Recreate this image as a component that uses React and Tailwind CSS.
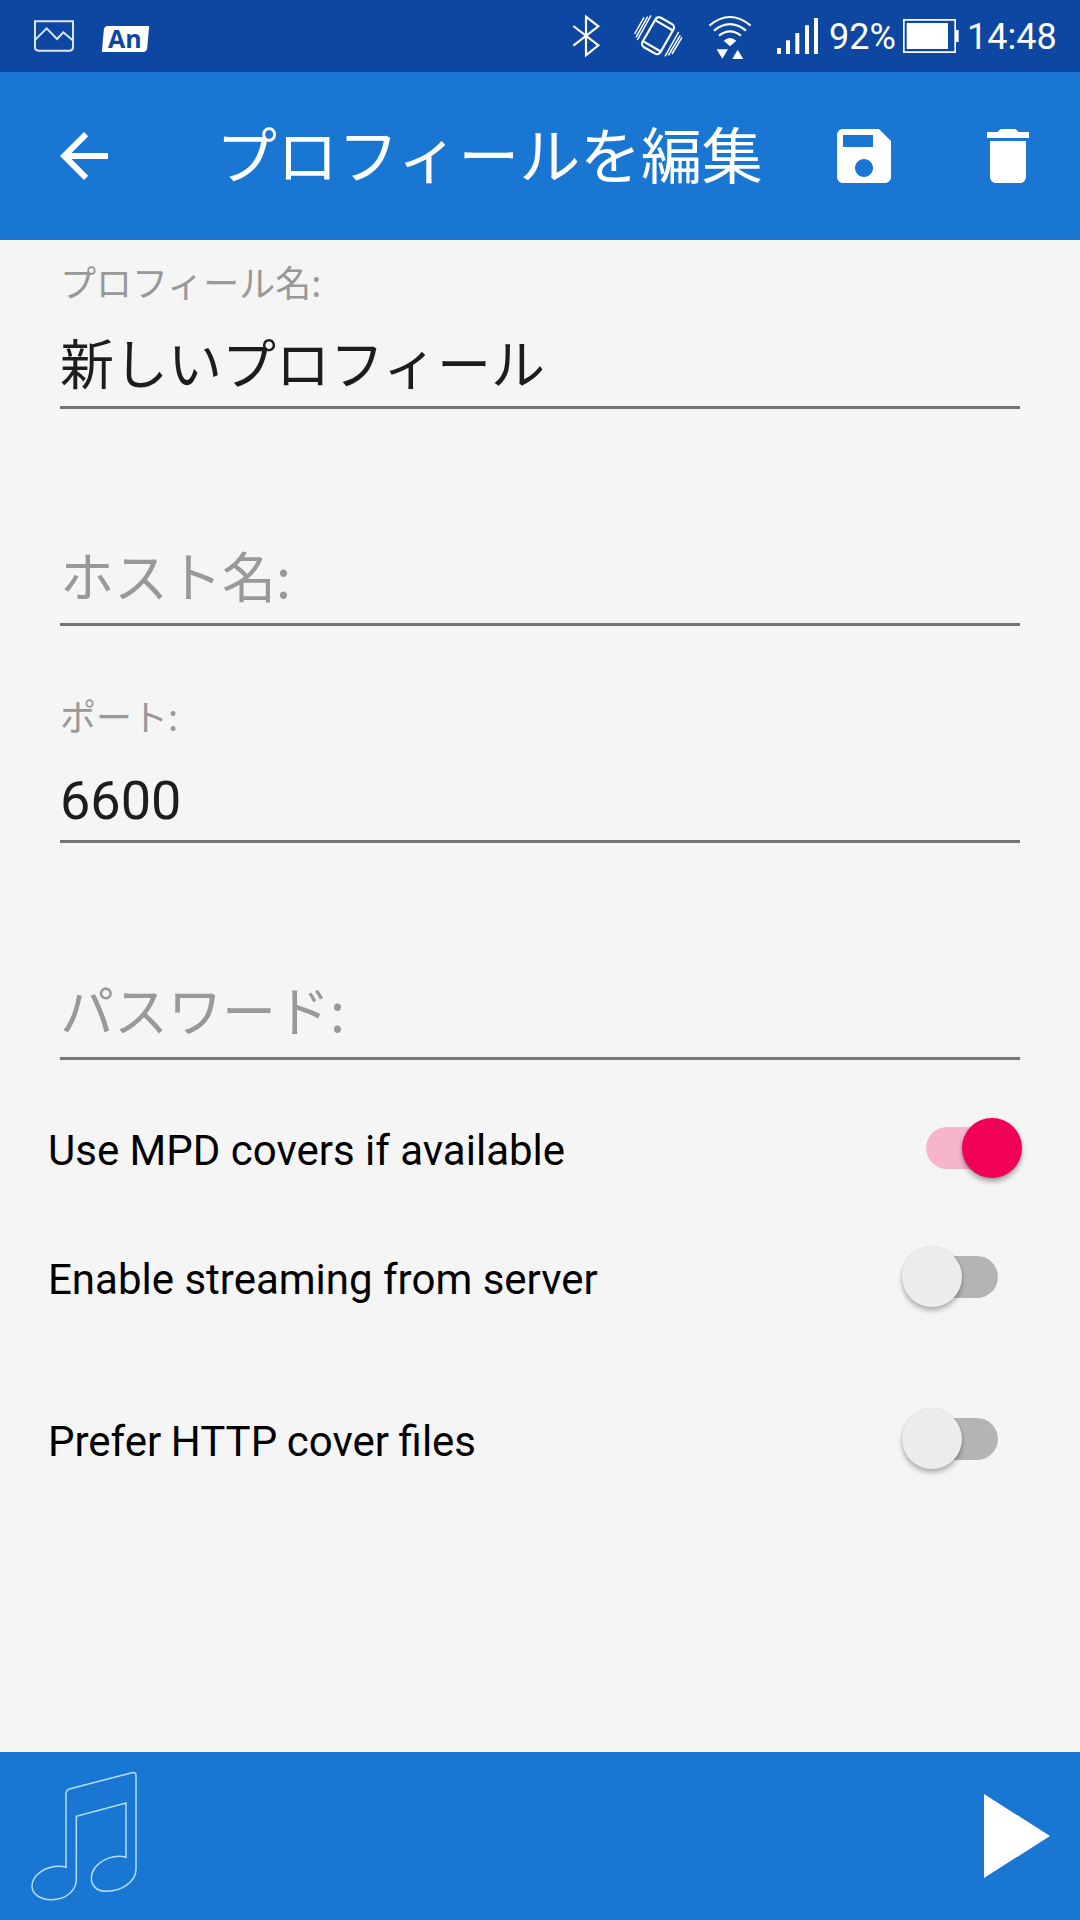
const jp = "font-[Roboto,'Noto_Sans_CJK_JP',sans-serif]";

function StatusBar() {
  return (
    <div className="flex h-[72px] items-start bg-[#0d47a1] text-white">
      <svg className="ml-[30px] h-[72px] w-[50px]" viewBox="90 0 150 216" fill="none" stroke="#dbe6fb" strokeWidth="6">
        <path d="M105 64H219V142Q219 152 209 152H115Q105 152 105 142Z" />
        <path d="M106 119L140 85L171 117L190 97L218 121" />
      </svg>
      <div className="mt-[26px] ml-[23px] flex h-[26px] w-[45px] -skew-x-[5deg] items-center justify-center rounded-tl-[4px] rounded-br-[4px] bg-white">
        <span className="-mt-[2px] mr-[1px] skew-x-[5deg] font-['Open_Sans',sans-serif] text-[25px] leading-[26px] font-bold text-[#0d47a1]">An</span>
      </div>
      <div className="grow" />
      <svg className="h-[72px] w-[280px] shrink-0" viewBox="0 0 840 216" fill="none" stroke="white" strokeWidth="6.5">
        <path d="M70 137L145 79L108 50V166L145 136L70 78" />
        <g transform="translate(324 107) rotate(30)">
          <rect x="-31" y="-51" width="62" height="102" rx="12" />
          <path d="M-31 -36H31M-31 37H31" />
        </g>
        <path d="M254 102L282 52M258 112L293 50M262 120L303 46M366 162L396 112M355 166L391 106M345 169L386 96" strokeWidth="4.5" />
        <path d="M478 77Q540 25 602 77M492 92Q540 53 588 92M507 107Q540 81 573 107" />
        <path d="M521 122Q540 106 559 122L540 139ZM500 148H534L517 176ZM547 177H580L563 149Z" fill="white" stroke="none" />
        <path d="M681 144H693V162H681ZM708 121H720V162H708ZM736 99H748V162H736ZM765 76H777V162H765ZM792 54H804V162H792Z" fill="white" stroke="none" />
      </svg>
      <span className="-ml-[1px] w-[72px] pt-[16px] font-[Roboto,sans-serif] text-[36px] leading-[42px]">92%</span>
      <svg className="h-[72px] w-[60px]" viewBox="303 0 180 216" fill="white">
        <path d="M309 57H468V90H476V126H468V159H309ZM314 62V154H463V62Z" fillRule="evenodd" />
        <rect x="320" y="69" width="124" height="78" />
      </svg>
      <span className="mr-[20px] ml-[6px] w-[93px] pt-[16px] font-[Roboto,sans-serif] text-[36px] leading-[42px]">14:48</span>
    </div>
  );
}

function Icon({ d, className }) {
  return (
    <svg className={"h-[72px] w-[72px] shrink-0 " + (className || "")} viewBox="0 0 24 24" fill="white">
      <path d={d} />
    </svg>
  );
}

function AppBar() {
  return (
    <header className="flex h-[168px] items-center bg-[#1976d2] pr-[36px] pl-[48px]">
      <Icon d="M20 11H7.83l5.59-5.59L12 4l-8 8 8 8 1.41-1.41L7.83 13H20v-2z" />
      <h1 className={`ml-[96px] grow pt-[4px] text-[61px] leading-[72px] tracking-[-0.12px] whitespace-nowrap text-white ${jp}`}>プロフィールを編集</h1>
      <Icon d="M17 3H5c-1.11 0-2 .9-2 2v14c0 1.1.89 2 2 2h14c1.1 0 2-.9 2-2V7l-4-4zm-5 16c-1.66 0-3-1.34-3-3s1.34-3 3-3 3 1.34 3 3-1.34 3-3 3zm3-10H5V5h10v4z" />
      <Icon className="ml-[72px]" d="M6 19c0 1.1.9 2 2 2h8c1.1 0 2-.9 2-2V7H6v12zM19 4h-3.5l-1-1h-5l-1 1H5v2h14V4z" />
    </header>
  );
}

function Field({ label, value }) {
  return (
    <div className={`mx-[60px] flex h-[217px] flex-col justify-end border-b-[3px] border-[#757575] first:h-[169px] ${jp}`}>
      {value ? (
        <>
          <label className="mb-[37px] font-['Noto_Sans_CJK_JP',sans-serif] text-[36px] leading-[34px] text-[#999999]">{label}</label>
          <div className="pb-[7px] text-[54px] leading-[64px] text-[#1d1d1d]">{value}</div>
        </>
      ) : (
        <div className="pb-[16px] font-['Noto_Sans_CJK_JP',sans-serif] text-[54px] leading-[64px] text-[#999999]">{label}</div>
      )}
    </div>
  );
}

function Switch({ on }) {
  return on ? (
    <div className="flex w-[96px] items-center">
      <div className="h-[42px] w-[66px] shrink-0 rounded-l-full bg-[#f6b5cd]" />
      <div className="-ml-[30px] h-[60px] w-[60px] shrink-0 rounded-full bg-[#f00057] shadow-[0_4px_5px_rgba(0,0,0,0.3),0_0_3px_rgba(0,0,0,0.12)]" />
    </div>
  ) : (
    <div className="flex w-[96px] flex-row-reverse items-center">
      <div className="h-[42px] w-[66px] shrink-0 rounded-r-full bg-[#b4b4b4]" />
      <div className="z-10 -mr-[30px] h-[60px] w-[60px] shrink-0 rounded-full bg-[#ececec] shadow-[0_4px_5px_rgba(0,0,0,0.25),0_0_3px_rgba(0,0,0,0.12)]" />
    </div>
  );
}

function SwitchRow({ label, on, className }) {
  return (
    <div className={"flex items-center justify-between pl-[48px] " + className}>
      <span className="pt-[5px] font-[Roboto,sans-serif] text-[42px] leading-[50px] text-black">{label}</span>
      <Switch on={on} />
    </div>
  );
}

function PlayerBar() {
  return (
    <footer className="flex h-[168px] items-center justify-between bg-[#1976d2] pr-[30px]">
      <svg className="h-[168px] w-[180px]" viewBox="0 36 540 504" fill="none" stroke="#b3e0fa" strokeWidth="4.5">
        <path d="M198 382V162Q198 149 211 146L396 98Q408 95 408 107V388C408 425 365 454 320 454C290 454 274 437 274 415C274 380 315 349 358 349Q368 349 378 352V189L229 229V418C229 450 200 479 155 479C120 479 96 462 96 439C96 405 135 379 178 379Q188 379 198 382Z" />
      </svg>
      <svg className="h-[84px] w-[66px]" viewBox="0 0 66 84" fill="white">
        <path d="M0 0L66 42L0 84Z" />
      </svg>
    </footer>
  );
}

export default function App() {
  return (
    <div className="flex h-[1920px] w-[1080px] flex-col overflow-hidden bg-[#f5f5f5]">
      <StatusBar />
      <AppBar />
      <main className="grow">
        <section>
          <Field label="プロフィール名:" value="新しいプロフィール" />
          <Field label="ホスト名:" />
          <Field label="ポート:" value="6600" />
          <Field label="パスワード:" />
        </section>
        <SwitchRow className="mt-[24px] h-[128px] pr-[58px]" label="Use MPD covers if available" on />
        <SwitchRow className="h-[130px] pr-[82px]" label="Enable streaming from server" />
        <SwitchRow className="mt-[33px] h-[128px] pr-[82px] [font-kerning:normal] [word-spacing:-0.8px]" label="Prefer HTTP cover files" />
      </main>
      <PlayerBar />
    </div>
  );
}
